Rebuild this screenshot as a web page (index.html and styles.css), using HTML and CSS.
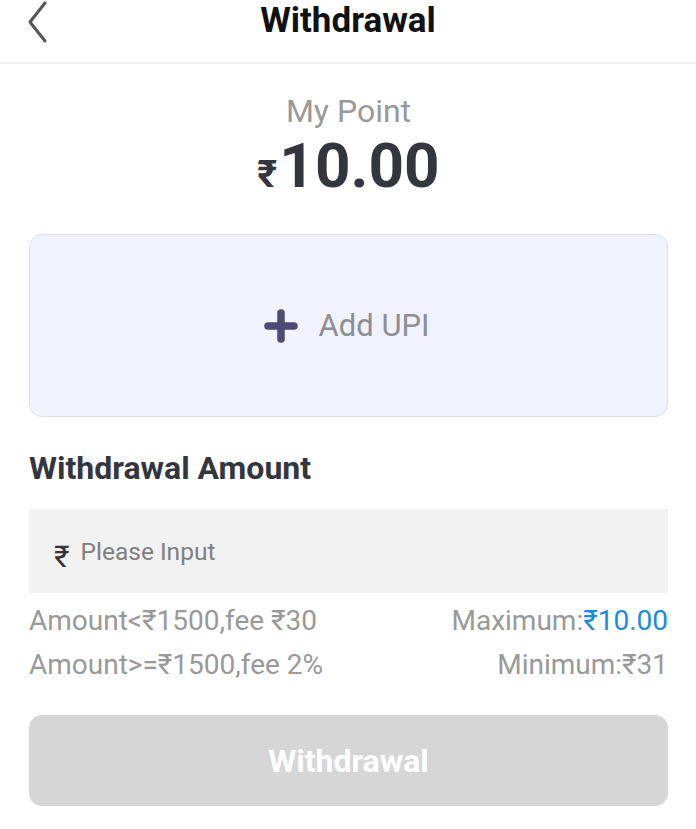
FILE: index.html
```html
<!DOCTYPE html>
<html lang="en">
<head>
<meta charset="utf-8">
<title>Withdrawal</title>
<link rel="stylesheet" href="styles.css">
</head>
<body>
<header class="topbar">
  <button class="back" aria-label="Back">
    <svg width="24" height="44" viewBox="0 0 24 44"><polyline points="20,3 5,22 20,41" fill="none" stroke="#555" stroke-width="3" stroke-linecap="round" stroke-linejoin="round"/></svg>
  </button>
  <h1 class="title">Withdrawal</h1>
</header>
<main class="page">
  <section class="points">
    <div class="points-label">My Point</div>
    <div class="points-value"><span class="rupee">₹</span><span class="num">10.00</span></div>
  </section>
  <div class="add-upi">
    <svg class="plus" width="34" height="34" viewBox="0 0 34 34"><path d="M17 4V30M4 17H30" stroke="#4b4b75" stroke-width="7.5" stroke-linecap="round"/></svg>
    <span class="add-text">Add UPI</span>
  </div>
  <h2 class="section-title">Withdrawal Amount</h2>
  <div class="input-box">
    <span class="input-rupee">₹</span>
    <span class="placeholder">Please Input</span>
  </div>
  <div class="fee-row first">
    <span>Amount&lt;₹1500,fee ₹30</span>
    <span>Maximum:<span class="blue">₹10.00</span></span>
  </div>
  <div class="fee-row">
    <span>Amount&gt;=₹1500,fee 2%</span>
    <span>Minimum:₹31</span>
  </div>
  <button class="submit">Withdrawal</button>
</main>
</body>
</html>
```
FILE: styles.css
```css
* { box-sizing: border-box; }
body {
  margin: 0;
  background: #fff;
  font-family: Roboto, "Noto Sans", "DejaVu Sans", sans-serif;
}
.topbar {
  position: relative;
  height: 64px;
  border-bottom: 2px solid #f1f1f1;
  display: flex;
  justify-content: center;
}
.back {
  position: absolute;
  left: 25px;
  top: 0;
  padding: 0;
  border: 0;
  background: none;
  line-height: 0;
}
.title {
  margin: 0;
  font-size: 35px;
  font-weight: 700;
  color: #111;
  line-height: 42px;
}
.page {
  padding: 0 28px 0 29px;
  display: flex;
  flex-direction: column;
}
.points {
  margin-top: 29px;
  display: flex;
  flex-direction: column;
  align-items: center;
}
.points-label {
  font-size: 32px;
  line-height: 36px;
  color: #999;
}
.points-value {
  margin-top: 2px;
  display: flex;
  align-items: baseline;
  color: #33353f;
  line-height: 70px;
}
.rupee {
  font-size: 38px;
  font-weight: 700;
  margin-right: 2px;
}
.num {
  font-size: 62px;
  font-weight: 700;
}
.add-upi {
  margin-top: 25px;
  height: 183px;
  background: #f0f2fe;
  border: 1.5px solid #dadef4;
  border-radius: 13px;
  display: flex;
  align-items: center;
  justify-content: center;
  gap: 21px;
}
.plus { margin-left: -4px; }
.add-text {
  font-size: 31px;
  color: #8e8e93;
}
.section-title {
  margin: 33px 0 0;
  font-size: 32px;
  line-height: 36px;
  font-weight: 700;
  color: #33363f;
}
.input-box {
  margin-top: 23px;
  height: 84px;
  background: #f2f2f2;
  display: flex;
  align-items: center;
  padding-left: 25px;
}
.input-rupee {
  font-size: 30px;
  color: #333;
  margin-right: 11px;
  position: relative;
  top: 5px;
}
.placeholder {
  font-size: 24.5px;
  color: #808080;
}
.fee-row {
  display: flex;
  justify-content: space-between;
  font-size: 28px;
  line-height: 44px;
  color: #999;
}
.fee-row.first { margin-top: 6px; }
.blue { color: #1a8ce0; }
.submit {
  margin-top: 28px;
  height: 91px;
  border: 0;
  border-radius: 13px;
  background: #d6d6d6;
  color: #fff;
  font-family: inherit;
  font-size: 32px;
  font-weight: 700;
}
```
